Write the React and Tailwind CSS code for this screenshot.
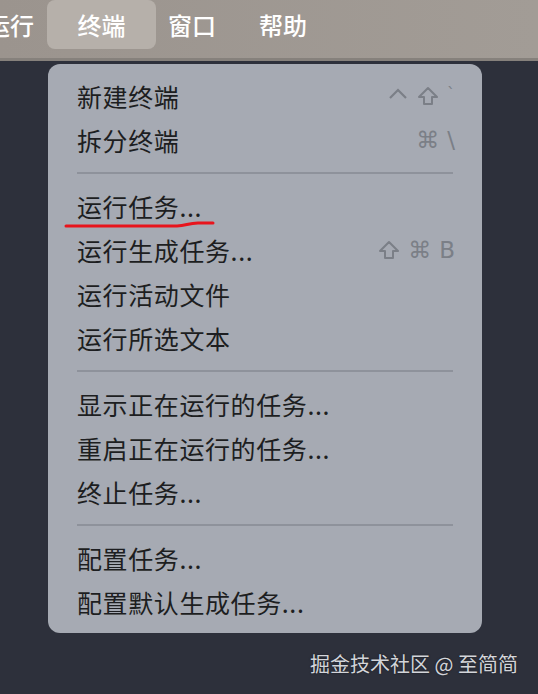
const FONT = { fontFamily: '"PingFang SC", "Noto Sans CJK SC", "Noto Sans", sans-serif' };

const groups = [
  [
    { label: "新建终端", keys: ["ctrl", "shift", "`"] },
    { label: "拆分终端", keys: ["⌘", "\\"] },
  ],
  [
    { label: "运行任务...", mark: true },
    { label: "运行生成任务...", keys: ["shift", "⌘", "B"] },
    { label: "运行活动文件" },
    { label: "运行所选文本" },
  ],
  [
    { label: "显示正在运行的任务..." },
    { label: "重启正在运行的任务..." },
    { label: "终止任务..." },
  ],
  [
    { label: "配置任务..." },
    { label: "配置默认生成任务..." },
  ],
];

function Key({ k }) {
  if (k === "shift") {
    return (
      <svg width="22" height="20" viewBox="0 0 22 20">
        <path d="M11 2 L20 11 L15 11 L15 18 L7 18 L7 11 L2 11 Z" fill="none" stroke="#7b7f87" strokeWidth="2" strokeLinejoin="round" />
      </svg>
    );
  }
  if (k === "ctrl") {
    return (
      <svg width="22" height="20" viewBox="0 0 22 20">
        <path d="M3 12 L11 4 L19 12" fill="none" stroke="#7b7f87" strokeWidth="2.2" />
      </svg>
    );
  }
  if (k === "`") {
    return <span className="w-[8px] self-start pt-[2px] text-[16px] leading-none">`</span>;
  }
  return <span className="leading-none">{k}</span>;
}

function Shortcut({ keys }) {
  return (
    <span className="flex h-[24px] items-center gap-[8px] text-[23px] text-[#7b7f87]" style={{ fontFamily: '"DejaVu Sans", "Noto Sans", sans-serif' }}>
      {keys.map((k, i) => (
        <Key key={i} k={k} />
      ))}
    </span>
  );
}

function MenuItem({ item }) {
  return (
    <div className="relative flex h-[44px] items-center justify-between pl-[29px] pr-[27px]">
      <span className="text-[25px] leading-none tracking-[0.6px] text-[#1d1e21]">{item.label}</span>
      {item.keys && <Shortcut keys={item.keys} />}
      {item.mark && (
        <svg className="absolute left-[16px] top-[36px]" width="152" height="10" viewBox="0 0 152 10">
          <path d="M2 6 L113 6 C122 6 124 3 134 3 L149 3" fill="none" stroke="#e8141c" strokeWidth="3" strokeLinecap="round" />
        </svg>
      )}
    </div>
  );
}

export default function App() {
  return (
    <div className="relative h-[694px] w-[538px] overflow-hidden bg-[#2d303b]" style={FONT}>
      {/* 菜单栏 */}
      <div className="flex h-[61px] items-start bg-gradient-to-r from-[#9b948e] to-[#a29c96] text-[24px] font-medium text-white border-b-[3px] border-[#86817c]">
        <span className="ml-[-14px] mt-[8px] leading-[34px]">运行</span>
        <span className="ml-[13px] h-[49px] w-[109px] rounded-[8px] bg-[#b6b0aa] text-center leading-[50px]">终端</span>
        <span className="ml-[12px] mt-[8px] leading-[34px]">窗口</span>
        <span className="ml-[43px] mt-[8px] leading-[34px]">帮助</span>
      </div>

      {/* 下拉菜单 */}
      <div className="absolute left-[48px] top-[64px] w-[434px] rounded-[12px] bg-[#a6aab3] pt-[10px] pb-[9px]">
        {groups.map((g, gi) => (
          <div key={gi}>
            {gi > 0 && (
              <div className="flex h-[22px] items-center px-[29px]">
                <div className="h-[2px] w-full bg-[#8e929b]" />
              </div>
            )}
            {g.map((item) => (
              <MenuItem key={item.label} item={item} />
            ))}
          </div>
        ))}
      </div>

      {/* 水印 */}
      <div className="absolute right-[20px] top-[649px] text-[20px] text-[#d3d5da]" style={{ textShadow: "0 0 2px rgba(0,0,0,0.5)" }}>
        掘金技术社区 @ 至简简
      </div>
    </div>
  );
}
